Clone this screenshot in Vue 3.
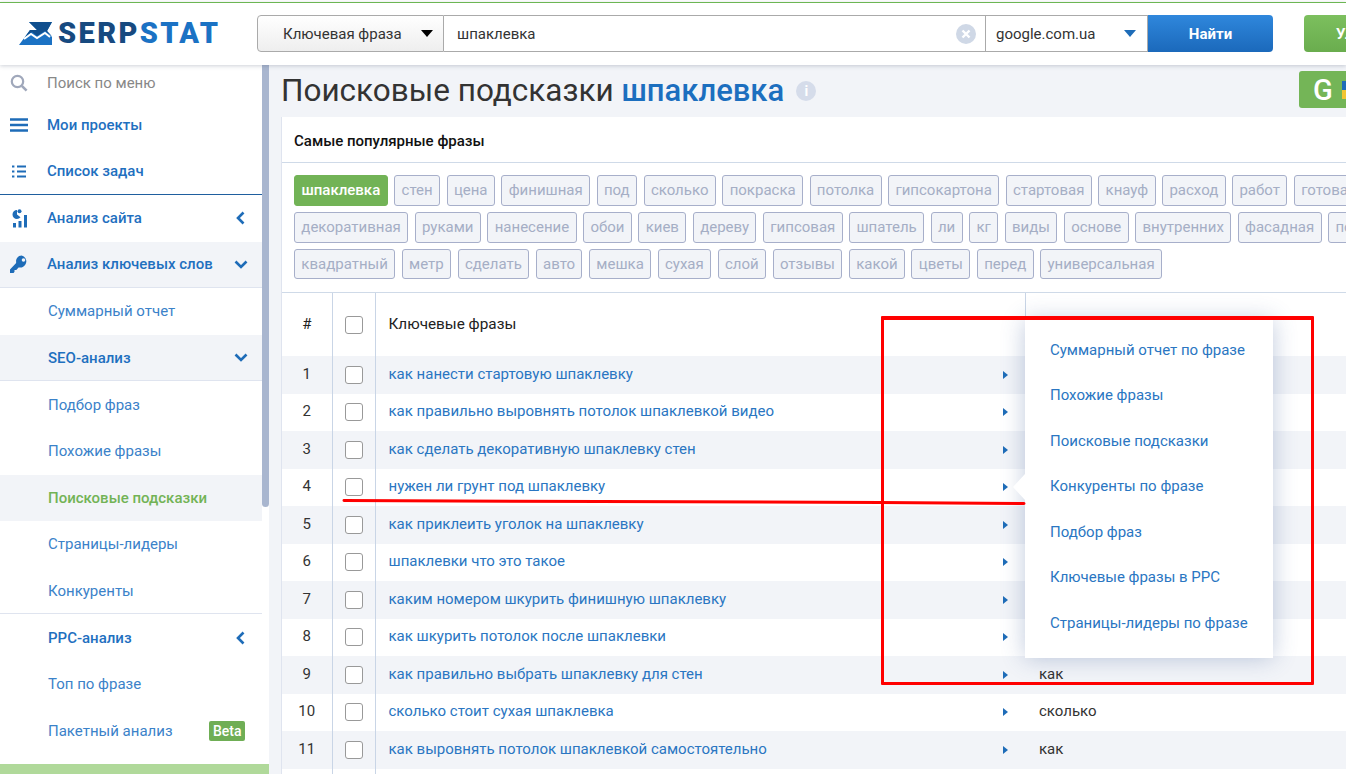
<template>
  <div class="page">
    <header class="topbar">
      <div class="logo">
        <svg class="logo-mark" width="34" height="23" viewBox="0 0 34 23">
          <path d="M0 23 L11 8 L18 8 L10 0 L33 0 L28 9 L33 15 L33 23 Z" fill="#1b72c4" />
          <path d="M10 0 L33 0 L28 9 L33 14 L26 9 L18 14 L13 10 L6 15 L11 8 L18 8 Z" fill="#104f8e" />
          <path d="M5 17 L12 12 L18 16 L26 11 L31 15" fill="none" stroke="#fff" stroke-width="2" />
        </svg>
        <span class="logo-text"><span class="logo-dark">SERP</span>STAT</span>
      </div>
      <div class="search">
        <div class="search-type">
          <span>Ключевая фраза</span>
          <i class="caret caret-black"></i>
        </div>
        <div class="search-input">
          <span>шпаклевка</span>
          <svg width="20" height="20" viewBox="0 0 20 20">
            <circle cx="10" cy="10" r="10" fill="#cfd8e6" />
            <path d="M6.5 6.5 L13.5 13.5 M13.5 6.5 L6.5 13.5" stroke="#fff" stroke-width="2.4" />
          </svg>
        </div>
        <div class="search-domain">
          <span>google.com.ua</span>
          <i class="caret caret-blue"></i>
        </div>
        <button class="search-button">Найти</button>
      </div>
      <button class="upgrade-button">Улучшить</button>
    </header>

    <div class="layout">
      <aside class="sidebar">
        <nav class="menu">
          <div class="menu-search">
            <svg class="menu-icon" width="18" height="18" viewBox="0 0 18 18">
              <circle cx="7.5" cy="7.5" r="5.7" fill="none" stroke="#a0a8bb" stroke-width="2.2" />
              <path d="M11.8 11.8 L16.6 16.6" stroke="#a0a8bb" stroke-width="2.6" />
            </svg>
            <span>Поиск по меню</span>
          </div>
          <div class="menu-top">
            <svg class="menu-icon" width="18" height="14" viewBox="0 0 18 14">
              <path d="M0 1.5 H18 M0 7 H18 M0 12.5 H18" stroke="#1e6cb8" stroke-width="2.6" />
            </svg>
            <span>Мои проекты</span>
          </div>
          <div class="menu-top menu-top-last">
            <svg class="menu-icon" width="18" height="13" viewBox="-2 0 18 13">
              <path d="M0 1.5 H2.4 M5 1.5 H14 M0 6.5 H2.4 M5 6.5 H14 M0 11.5 H2.4 M5 11.5 H14" stroke="#1e6cb8" stroke-width="1.8" />
            </svg>
            <span>Список задач</span>
          </div>
          <div class="menu-group menu-site">
            <svg class="menu-icon" width="18" height="19" viewBox="-2 0 18 19">
              <path d="M5 1 A4.5 4.5 0 0 0 0.5 5.5 A4.5 4.5 0 0 0 5 10 A4.5 4.5 0 0 0 8.5 8.3 L5 5.5 Z" fill="#1e6cb8" />
              <circle cx="7.5" cy="2.2" r="2" fill="#1e6cb8" />
              <path d="M1 14 H4 V18.5 H1 Z M6.5 12 H9.5 V18.5 H6.5 Z M12 6 H15 V18.5 H12 Z" fill="#1e6cb8" />
            </svg>
            <span>Анализ сайта</span>
            <svg class="chevron chevron-left" width="9" height="14" viewBox="0 0 9 14"><path d="M7.5 1.5 L2 7 L7.5 12.5" fill="none" stroke="#1e6cb8" stroke-width="2.6" /></svg>
          </div>
          <div class="menu-group menu-open">
            <svg class="menu-icon" width="18" height="19" viewBox="0 0 20 20">
              <path d="M13 0 A6.5 6.5 0 0 0 6.8 8.4 L0 15.5 V19.5 H4 L5 18 V16 H7 L9.5 13.2 A6.5 6.5 0 1 0 13 0 Z M15 3 A2 2 0 1 1 15 7 A2 2 0 0 1 15 3 Z" fill="#1e6cb8" fill-rule="evenodd" />
            </svg>
            <span>Анализ ключевых слов</span>
            <svg class="chevron chevron-down" width="14" height="9" viewBox="0 0 14 9"><path d="M1.5 1.5 L7 7 L12.5 1.5" fill="none" stroke="#1e6cb8" stroke-width="2.6" /></svg>
          </div>
          <div
            v-for="item in subMenu"
            :key="item.title"
            class="menu-sub"
            :class="{ 'menu-sub-head': item.head, 'menu-sub-shaded': item.shaded, 'menu-sub-active': item.active, 'menu-sub-line': item.line }"
          >
            <span>{{ item.title }}</span>
            <svg v-if="item.open" class="chevron chevron-down" width="14" height="9" viewBox="0 0 14 9"><path d="M1.5 1.5 L7 7 L12.5 1.5" fill="none" stroke="#1e6cb8" stroke-width="2.6" /></svg>
            <svg v-if="item.closed" class="chevron chevron-left" width="9" height="14" viewBox="0 0 9 14"><path d="M7.5 1.5 L2 7 L7.5 12.5" fill="none" stroke="#1e6cb8" stroke-width="2.6" /></svg>
            <b v-if="item.beta" class="beta">Beta</b>
          </div>
        </nav>
        <div class="scroll-track"><div class="scroll-thumb"></div></div>
        <div class="sidebar-bottom"></div>
      </aside>

      <main class="content">
        <div class="title-row">
          <h1>Поисковые подсказки <span>шпаклевка</span></h1>
          <span class="info">i</span>
          <div class="google-button">
            <b>G</b>
            <i class="flag"></i>
          </div>
        </div>

        <section class="card">
          <h2>Самые популярные фразы</h2>
          <div class="tags">
            <div v-for="(line, l) in tagLines" :key="l" class="tag-line">
              <span v-for="tag in line" :key="tag" class="tag" :class="{ 'tag-active': tag === 'шпаклевка' }">{{ tag }}</span>
            </div>
          </div>

          <div class="table-wrap">
            <table class="phrases">
              <colgroup>
                <col class="col-num" />
                <col class="col-check" />
                <col class="col-phrase" />
                <col />
              </colgroup>
              <thead>
                <tr>
                  <th class="num">#</th>
                  <th class="check"><i class="box"></i></th>
                  <th class="phrase">Ключевые фразы</th>
                  <th class="last"></th>
                </tr>
              </thead>
              <tbody>
                <tr v-for="(row, i) in rows" :key="i">
                  <td class="num">{{ i + 1 }}</td>
                  <td class="check"><i class="box"></i></td>
                  <td class="phrase">
                    <div class="phrase-inner">
                      <a>{{ row[0] }}</a>
                      <i class="row-arrow"></i>
                    </div>
                  </td>
                  <td class="last">{{ row[1] }}</td>
                </tr>
                <tr>
                  <td class="num"></td>
                  <td class="check"></td>
                  <td class="phrase"></td>
                  <td class="last"></td>
                </tr>
              </tbody>
            </table>

            <div class="popup">
              <i class="popup-tip"></i>
              <a v-for="link in popupLinks" :key="link">{{ link }}</a>
            </div>
          </div>
        </section>
      </main>
    </div>

    <!-- красная разметка поверх скриншота -->
    <div class="mark-box"></div>
    <svg class="mark-line" width="1346" height="774" viewBox="0 0 1346 774">
      <path d="M344 500.5 L600 501.5 L880 502.5 L1024 503.5" fill="none" stroke="#f00" stroke-width="3" stroke-linecap="round" />
    </svg>
  </div>
</template>

<script setup>
const subMenu = [
  { title: 'Суммарный отчет' },
  { title: 'SEO-анализ', head: true, shaded: true, open: true, line: true },
  { title: 'Подбор фраз' },
  { title: 'Похожие фразы' },
  { title: 'Поисковые подсказки', shaded: true, active: true },
  { title: 'Страницы-лидеры' },
  { title: 'Конкуренты', line: true },
  { title: 'PPC-анализ', head: true, closed: true },
  { title: 'Топ по фразе' },
  { title: 'Пакетный анализ', beta: true }
]

const tagLines = [
  ['шпаклевка', 'стен', 'цена', 'финишная', 'под', 'сколько', 'покраска', 'потолка', 'гипсокартона', 'стартовая', 'кнауф', 'расход', 'работ', 'готовая'],
  ['декоративная', 'руками', 'нанесение', 'обои', 'киев', 'дереву', 'гипсовая', 'шпатель', 'ли', 'кг', 'виды', 'основе', 'внутренних', 'фасадная', 'после'],
  ['квадратный', 'метр', 'сделать', 'авто', 'мешка', 'сухая', 'слой', 'отзывы', 'какой', 'цветы', 'перед', 'универсальная']
]

/* строки 1-8 в последней колонке закрыты меню, поэтому там пусто */
const rows = [
  ['как нанести стартовую шпаклевку', ''],
  ['как правильно выровнять потолок шпаклевкой видео', ''],
  ['как сделать декоративную шпаклевку стен', ''],
  ['нужен ли грунт под шпаклевку', ''],
  ['как приклеить уголок на шпаклевку', ''],
  ['шпаклевки что это такое', ''],
  ['каким номером шкурить финишную шпаклевку', ''],
  ['как шкурить потолок после шпаклевки', ''],
  ['как правильно выбрать шпаклевку для стен', 'как'],
  ['сколько стоит сухая шпаклевка', 'сколько'],
  ['как выровнять потолок шпаклевкой самостоятельно', 'как']
]

const popupLinks = [
  'Суммарный отчет по фразе',
  'Похожие фразы',
  'Поисковые подсказки',
  'Конкуренты по фразе',
  'Подбор фраз',
  'Ключевые фразы в PPC',
  'Страницы-лидеры по фразе'
]
</script>

<style>
html, body {
  margin: 0;
  overflow: hidden;
}
</style>

<style scoped>
.page {
  position: relative;
  height: 774px;
  overflow: hidden;
  background: #fff;
  font-family: Roboto, "Noto Sans CJK SC", sans-serif;
  font-size: 15px;
  color: #333;
}

/* шапка */
.topbar {
  height: 61px;
  margin-top: 2px;
  padding-bottom: 1px;
  border-top: 1px solid #6cb653;
  display: flex;
  align-items: center;
  box-shadow: 0 1px 4px rgba(60, 70, 100, 0.25);
  position: relative;
  z-index: 2;
  background: #fff;
}
.logo {
  width: 257px;
  flex-shrink: 0;
  padding-left: 19px;
  box-sizing: border-box;
  display: flex;
  align-items: center;
  gap: 5px;
}
.logo-text {
  font-size: 29px;
  font-weight: 900;
  letter-spacing: 2.4px;
  color: #1b72c4;
  line-height: 1;
}
.logo-dark {
  color: #174a80;
}
.search {
  width: 1016px;
  flex-shrink: 0;
  height: 37px;
  display: flex;
}
.search-type {
  width: 187px;
  box-sizing: border-box;
  border: 1px solid #aaa;
  border-radius: 4px 0 0 4px;
  background: linear-gradient(#fff, #eee);
  display: flex;
  align-items: center;
  padding: 0 10px 0 25px;
  justify-content: space-between;
}
.search-input {
  flex: 1;
  border: 1px solid #aaa;
  border-left: none;
  border-right: none;
  display: flex;
  align-items: center;
  justify-content: space-between;
  padding: 0 9px 0 13px;
}
.search-domain {
  width: 163px;
  box-sizing: border-box;
  border: 1px solid #aaa;
  display: flex;
  align-items: center;
  justify-content: space-between;
  padding: 0 11px 0 10px;
}
.caret {
  width: 0;
  height: 0;
  border-left: 6px solid transparent;
  border-right: 6px solid transparent;
  border-top: 7px solid #000;
}
.caret-blue {
  border-top-color: #1e6cb8;
}
.search-button {
  width: 125px;
  border: none;
  border-radius: 0 4px 4px 0;
  background: linear-gradient(#2f87dc, #1b69bb);
  color: #fff;
  font: 700 15px Roboto, sans-serif;
}
.upgrade-button {
  width: 130px;
  height: 37px;
  margin-left: 31px;
  flex-shrink: 0;
  border: none;
  border-radius: 4px;
  background: linear-gradient(#7cbf5e, #6aad4e);
  color: #fff;
  font: 700 15px Roboto, sans-serif;
  text-align: left;
  padding-left: 32px;
}

.layout {
  display: flex;
  height: 709px;
}

/* боковое меню */
.sidebar {
  position: relative;
  width: 269px;
  flex-shrink: 0;
  display: flex;
  overflow: hidden;
}
.menu {
  width: 262px;
  flex-shrink: 0;
}
.scroll-track {
  width: 7px;
}
.scroll-thumb {
  height: 442px;
  background: #a9b6cf;
  border-radius: 0 0 4px 4px;
}
.sidebar-bottom {
  position: absolute;
  left: 0;
  right: 0;
  bottom: 0;
  height: 10px;
  background: #b0d99a;
}
.menu-search {
  height: 37px;
  padding: 0 0 1px 10px;
  box-sizing: border-box;
  display: flex;
  align-items: center;
  color: #888;
}
.menu-icon {
  flex-shrink: 0;
  margin-right: 19px;
}
.menu-top,
.menu-group {
  display: flex;
  align-items: center;
  color: #1f70bf;
  font-weight: 500;
  padding-left: 10px;
  box-sizing: border-box;
  height: 46.6px;
}
.menu-top-last {
  border-bottom: 1px solid #1f5f9f;
  height: 46px;
}
.menu-site {
  height: 47px;
}
.menu-group span {
  flex: 1;
}
.chevron-left {
  margin-right: 17px;
}
.chevron-down {
  margin-right: 14px;
}
.menu-open {
  background: #f2f4f8;
  border-bottom: 1px solid #dfe4ef;
}
.menu-sub {
  height: 46.6px;
  display: flex;
  align-items: center;
  justify-content: space-between;
  padding: 0 0 0 48px;
  box-sizing: border-box;
  color: #3b82c9;
}
.menu-sub-head {
  font-weight: 500;
  color: #1f70bf;
}
.menu-sub-shaded {
  background: #f2f4f8;
}
.menu-sub-active {
  color: #72b356;
  font-weight: 500;
}
.menu-sub-line {
  border-bottom: 1px solid #dfe4ef;
}
.beta {
  background: #6fae55;
  color: #fff;
  font-size: 14px;
  font-weight: 500;
  padding: 2px 3.5px;
  border-radius: 2px;
  line-height: 16px;
  margin-right: 17px;
}

/* контент */
.content {
  flex: 1;
  background: #f2f4f8;
  padding-left: 12px;
  overflow: hidden;
}
.title-row {
  width: 1108px;
  height: 52px;
  display: flex;
  align-items: center;
}
h1 {
  margin: 0;
  font-size: 31.5px;
  font-weight: 400;
  color: #333;
  line-height: 52px;
}
h1 span {
  color: #1c6fbf;
  font-size: 31px;
  font-weight: 500;
}
.info {
  width: 20px;
  height: 20px;
  border-radius: 50%;
  background: #d5dcea;
  color: #fff;
  font-weight: 700;
  font-size: 14px;
  text-align: center;
  line-height: 20px;
  margin-left: 12px;
}
.google-button {
  width: 90px;
  height: 37px;
  margin: -3px 0 0 auto;
  border-radius: 3px;
  background: #74b557;
  display: flex;
  align-items: center;
  color: #fff;
  padding-left: 14px;
  box-sizing: border-box;
  gap: 9px;
}
.google-button b {
  font-size: 29px;
  font-weight: 500;
}
.flag {
  width: 24px;
  height: 18px;
  background: linear-gradient(#1e6cb8 50%, #f2c531 50%);
}
.card {
  width: 1108px;
  box-sizing: border-box;
  background: #fff;
  border-left: 1px solid #dfe4ef;
}
h2 {
  margin: 0;
  height: 45px;
  line-height: 49px;
  padding-left: 12px;
  font-size: 15px;
  font-weight: 500;
  color: #111;
  border-bottom: 1px solid #cfdae8;
}
.tags {
  padding: 12px 12px 13px;
  display: flex;
  flex-direction: column;
  gap: 6px;
  overflow: hidden;
  border-bottom: 1px solid #cfdae8;
}
.tag-line {
  display: flex;
  gap: 6.5px;
  white-space: nowrap;
}
.tag {
  height: 31px;
  line-height: 29px;
  box-sizing: border-box;
  padding: 0 6.35px;
  border: 1px solid #a7afca;
  border-radius: 3px;
  background: #f2f4f8;
  color: #a5aec5;
  font-size: 15px;
  flex-shrink: 0;
}
.tag-line:last-child .tag {
  height: 30px;
  line-height: 28px;
}
.tag-active {
  padding: 0 6.5px;
  background: #72b356;
  border-color: #72b356;
  color: #fff;
  font-weight: 500;
}

/* таблица */
.table-wrap {
  position: relative;
}
.phrases {
  width: 100%;
  table-layout: fixed;
  border-collapse: collapse;
}
.col-num { width: 50px; }
.col-check { width: 43px; }
.col-phrase { width: 650px; }
.phrases th,
.phrases td {
  padding: 0 0 2px;
  font-weight: 400;
}
.phrases .check {
  padding: 0;
}
.phrases thead tr {
  height: 63px;
}
.phrases thead th {
  color: #222;
}
.phrases thead .phrase {
  font-size: 15.3px;
  border-right: 1px solid #c9d5e6;
}
.phrases tbody tr {
  height: 37.5px;
}
.phrases tbody tr:nth-child(odd) {
  background: #f2f4f8;
}
.num {
  text-align: center;
  border-right: 1px solid #c9d5e6;
}
.check {
  text-align: center;
  border-right: 1px solid #c9d5e6;
}
.phrase {
  text-align: left;
  padding-left: 13px !important;
}
.last {
  padding-left: 14px !important;
  color: #333;
}
.box {
  display: block;
  width: 18px;
  height: 18px;
  margin: 0 auto;
  box-sizing: border-box;
  border: 1px solid #999;
  border-radius: 3px;
  background: #fff;
}
.phrase-inner {
  display: flex;
  align-items: center;
  justify-content: space-between;
  padding-right: 17px;
}
.phrase-inner a {
  color: #2a76c2;
}
.row-arrow {
  width: 0;
  height: 0;
  margin-top: 2px;
  border-left: 5px solid #1e6cb8;
  border-top: 4.5px solid transparent;
  border-bottom: 4.5px solid transparent;
}

/* выпадающее меню */
.popup {
  position: absolute;
  left: 743px;
  top: 27px;
  width: 248px;
  height: 338px;
  box-sizing: border-box;
  padding: 7.5px 25px 0;
  background: #fff;
  box-shadow: 0 0 22px rgba(60, 90, 150, 0.32);
  display: flex;
  flex-direction: column;
}
.popup a {
  height: 45.5px;
  line-height: 45.5px;
  color: #2a76c2;
  white-space: nowrap;
}
.popup-tip {
  position: absolute;
  left: -12px;
  top: 154px;
  width: 12px;
  height: 26px;
  background: #fff;
  clip-path: polygon(100% 0, 0 50%, 100% 100%);
}

/* красная разметка */
.mark-box {
  position: absolute;
  left: 881px;
  top: 316px;
  width: 433px;
  height: 369px;
  box-sizing: border-box;
  border: 3px solid #f00;
  border-top-width: 4px;
  border-radius: 1px;
}
.mark-line {
  position: absolute;
  left: 0;
  top: 0;
  pointer-events: none;
}
</style>
